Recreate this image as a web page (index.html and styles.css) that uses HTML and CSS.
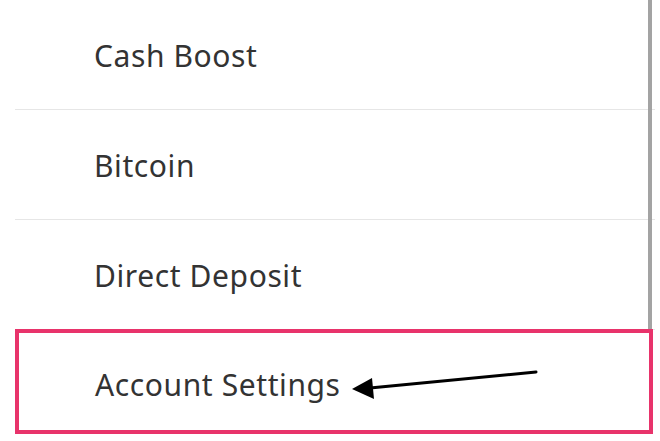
FILE: index.html
```html
<!DOCTYPE html>
<html>
<head>
<meta charset="utf-8">
<link rel="stylesheet" href="styles.css">
</head>
<body>
<div class="page">
  <ul class="menu">
    <li class="item">Cash Boost</li>
    <li class="item">Bitcoin</li>
    <li class="item">Direct Deposit</li>
    <li class="item selected">
      <span>Account Settings</span>
      <svg class="arrow" width="200" height="40" viewBox="0 0 200 40">
        <line x1="20" y1="20" x2="186" y2="4" stroke="#000" stroke-width="3" stroke-linecap="round"/>
        <polygon points="2,21 22,10 24,31" fill="#000"/>
      </svg>
    </li>
  </ul>
  <div class="scrollbar"></div>
</div>
</body>
</html>
```
FILE: styles.css
```css
* { box-sizing: border-box; }
html, body {
  margin: 0;
  padding: 0;
  background: #fff;
  width: 660px;
  height: 441px;
  overflow: hidden;
}
.page {
  position: relative;
  width: 660px;
  height: 441px;
}
.menu {
  list-style: none;
  margin: 0;
  padding: 0 5px 0 15px;
  display: flex;
  flex-direction: column;
}
.item {
  height: 110px;
  border-bottom: 1px solid #e6e6e6;
  display: flex;
  align-items: center;
  padding-left: 79px;
  padding-top: 1px;
  font-family: "Noto Sans", sans-serif;
  font-size: 30px;
  letter-spacing: 0.6px;
  color: #333;
}
.item.selected {
  height: 105px;
  margin-top: -1px;
  margin-right: 2px;
  border: 4px solid #e8336b;
  padding-left: 76px;
  padding-top: 6px;
  position: relative;
}
.arrow {
  position: absolute;
  left: 331px;
  top: 35px;
}
.scrollbar {
  position: absolute;
  left: 648px;
  top: 0;
  width: 4px;
  height: 329px;
  background: #a3a3a3;
}
```
